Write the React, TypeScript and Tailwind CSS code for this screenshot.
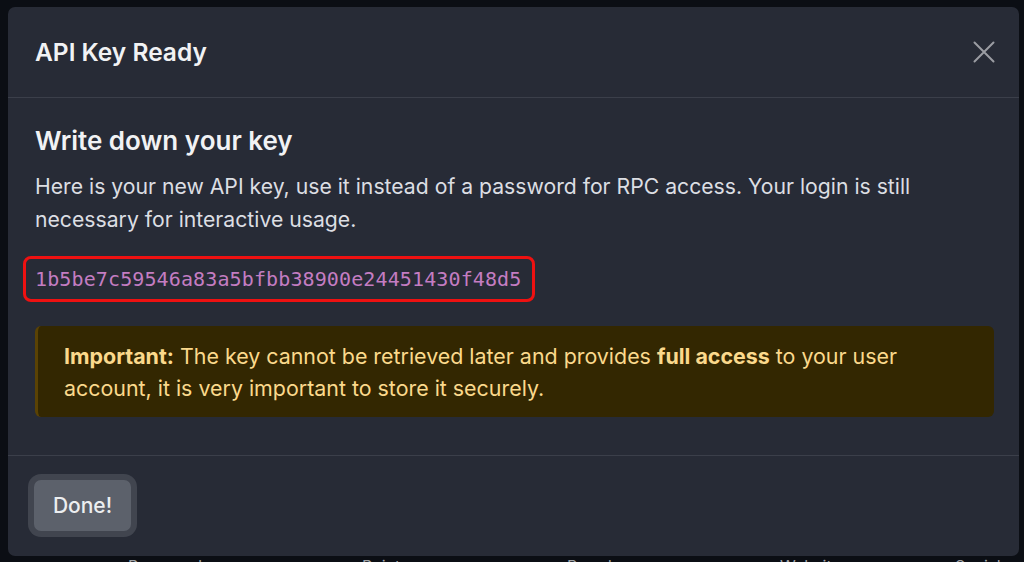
export default function App() {
  return (
    <div className="w-[1024px] h-[562px] overflow-hidden bg-[#0b0e14] flex flex-col pt-[7px] px-[8px] font-['Inter','Liberation_Sans',sans-serif]">
      {/* Modal */}
      <div className="w-[1011px] h-[549px] shrink-0 bg-[#272b36] rounded-[7px] flex flex-col">
        {/* Header */}
        <div className="h-[91px] shrink-0 border-b border-[#3b3f4a] flex items-center justify-between pl-[27px] pr-[24px]">
          <h5 className="text-[24.5px] font-semibold text-[#f1f2f4] leading-none">
            API Key Ready
          </h5>
          <button className="w-[22px] h-[22px] flex items-center justify-center">
            <svg width="22" height="22" viewBox="0 0 22 22">
              <path
                d="M1.5 1.5 L20.5 20.5 M20.5 1.5 L1.5 20.5"
                stroke="#9b9da3"
                strokeWidth="2"
                strokeLinecap="round"
              />
            </svg>
          </button>
        </div>

        {/* Body */}
        <div className="flex-1 px-[27px] pt-[27px] flex flex-col border-b border-[#3b3f4a]">
          <h4 className="text-[26px] font-semibold text-[#f1f2f4] leading-[32px]">
            Write down your key
          </h4>
          <p className="mt-[13px] text-[21.2px] leading-[33px] text-[#dcdee3]">
            Here is your new API key, use it instead of a password for RPC
            access. Your login is still necessary for interactive usage.
          </p>
          <div className="mt-[20px] -ml-[12px] self-start h-[46px] flex items-center border-[3px] border-[#ee1111] rounded-[8px] pl-[9px] pr-[11px]">
            <code className="font-['DejaVu_Sans_Mono',monospace] text-[20px] text-[#c47dc2] tracking-[0.12px]">
              1b5be7c59546a83a5bfbb38900e24451430f48d5
            </code>
          </div>
          <div className="mt-[24px] mr-[-2px] bg-[#332701] border-l-[3px] border-[#5a4204] rounded-[6px] pl-[26px] pr-[20px] pt-[14px] pb-[13px] text-[21.4px] leading-[32px] text-[#fbd98c]">
            <strong className="font-bold">Important:</strong> The key cannot be
            retrieved later and provides{" "}
            <strong className="font-bold">full access</strong> to your user
            account, it is very important to store it securely.
          </div>
        </div>

        {/* Footer */}
        <div className="h-[100px] shrink-0 pl-[26px] pt-[24px]">
          <button className="w-[97px] h-[51px] rounded-[7px] bg-[#5c616b] text-[21px] font-medium text-[#eceef0] ring-[6px] ring-[#41454f]">
            Done!
          </button>
        </div>
      </div>

      {/* Page behind the modal, barely visible */}
      <div className="relative h-[20px] text-[16px] text-[#a0a3a8] leading-none">
        <span className="absolute left-[120px] top-[2px]">Password</span>
        <span className="absolute left-[354px] top-[2px]">Points</span>
        <span className="absolute left-[559px] top-[2px]">Brands</span>
        <span className="absolute left-[772px] top-[2px]">Website</span>
        <span className="absolute left-[947px] top-[2px]">Social</span>
      </div>
    </div>
  );
}
